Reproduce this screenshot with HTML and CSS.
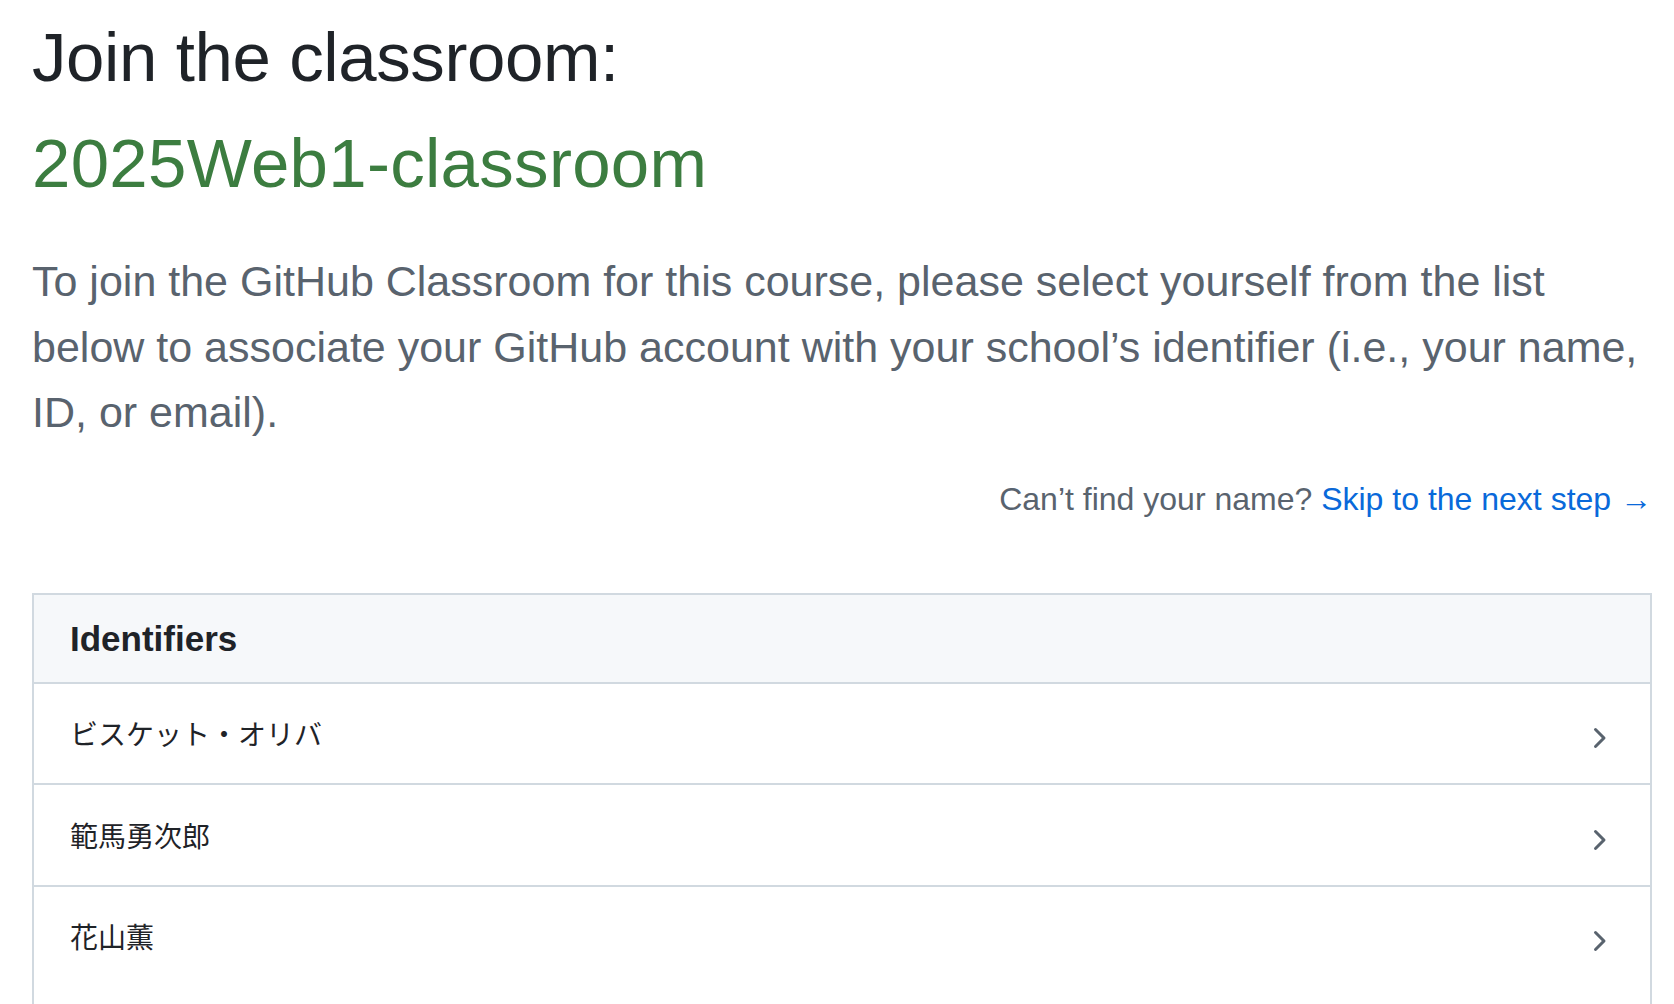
FILE: index.html
```html
<!DOCTYPE html>
<html lang="ja">
<head>
<meta charset="utf-8">
<title>Join the classroom</title>
<link rel="stylesheet" href="styles.css">
</head>
<body>
<main class="page">
  <h1 class="title">Join the classroom:</h1>
  <h2 class="title title-green">2025Web1-classroom</h2>
  <p class="lead">To join the GitHub Classroom for this course, please select yourself from the list below to associate your GitHub account with your school’s identifier (i.e., your name, ID, or email).</p>
  <p class="skip">Can’t find your name? <a class="skip-link" href="#">Skip to the next step →</a></p>
  <section class="box">
    <div class="box-header">Identifiers</div>
    <a class="box-row" href="#"><span class="row-name">ビスケット・オリバ</span><svg class="chev" viewBox="0 0 16 16" width="32" height="32"><path d="M6.22 3.22a.75.75 0 0 1 1.06 0l4.25 4.25a.75.75 0 0 1 0 1.06l-4.250 4.25a.751.751 0 0 1-1.042-.018.751.751 0 0 1-.018-1.042L9.94 8 6.22 4.28a.75.75 0 0 1 0-1.06Z"/></svg></a>
    <a class="box-row" href="#"><span class="row-name">範馬勇次郎</span><svg class="chev" viewBox="0 0 16 16" width="32" height="32"><path d="M6.22 3.22a.75.75 0 0 1 1.06 0l4.25 4.25a.75.75 0 0 1 0 1.06l-4.25 4.25a.751.751 0 0 1-1.042-.018.751.751 0 0 1-.018-1.042L9.94 8 6.22 4.28a.75.75 0 0 1 0-1.06Z"/></svg></a>
    <a class="box-row" href="#"><span class="row-name">花山薫</span><svg class="chev" viewBox="0 0 16 16" width="32" height="32"><path d="M6.22 3.22a.75.75 0 0 1 1.06 0l4.25 4.25a.75.75 0 0 1 0 1.06l-4.25 4.25a.751.751 0 0 1-1.042-.018.751.751 0 0 1-.018-1.042L9.94 8 6.22 4.28a.75.75 0 0 1 0-1.06Z"/></svg></a>
  </section>
</main>
</body>
</html>
```

FILE: styles.css
```css
html, body {
  margin: 0;
  padding: 0;
  background: #ffffff;
}
body {
  font-family: "Liberation Sans", "Noto Sans CJK JP", sans-serif;
  color: #1f2328;
}
.page {
  padding: 5px 22px 0 32px;
}
.title {
  margin: 0;
  font-size: 69px;
  line-height: 106px;
  font-weight: 400;
  color: #1f2328;
}
.title-green {
  color: #3c7d40;
  letter-spacing: 0.3px;
}
.title:first-child {
  letter-spacing: -0.4px;
}
.lead {
  margin: 32px 0 0;
  font-size: 43px;
  line-height: 65.5px;
  color: #59636e;
}
.skip {
  margin: 29px 0 0;
  font-size: 32px;
  line-height: 48px;
  text-align: right;
  color: #59636e;
}
.skip-link {
  color: #0969da;
  text-decoration: none;
}
.box {
  margin-top: 70px;
  border: 2px solid #d1d9e0;
  padding-bottom: 60px;
}
.box-header {
  background: #f6f8fa;
  height: 87px;
  line-height: 87px;
  padding: 0 36px;
  font-size: 35px;
  font-weight: 700;
  color: #1f2328;
  border-bottom: 2px solid #d1d9e0;
}
.box-row {
  display: flex;
  align-items: center;
  justify-content: space-between;
  height: 99.5px;
  padding: 0 36px 0 36px;
  border-bottom: 2px solid #d1d9e0;
  color: #1f2328;
  text-decoration: none;
}
.box-row:last-child {
  border-bottom: none;
}
.row-name {
  font-size: 28px;
  font-family: "Noto Sans CJK JP", sans-serif;
}
.chev {
  fill: #59636e;
  position: relative;
  top: 5px;
}
```
